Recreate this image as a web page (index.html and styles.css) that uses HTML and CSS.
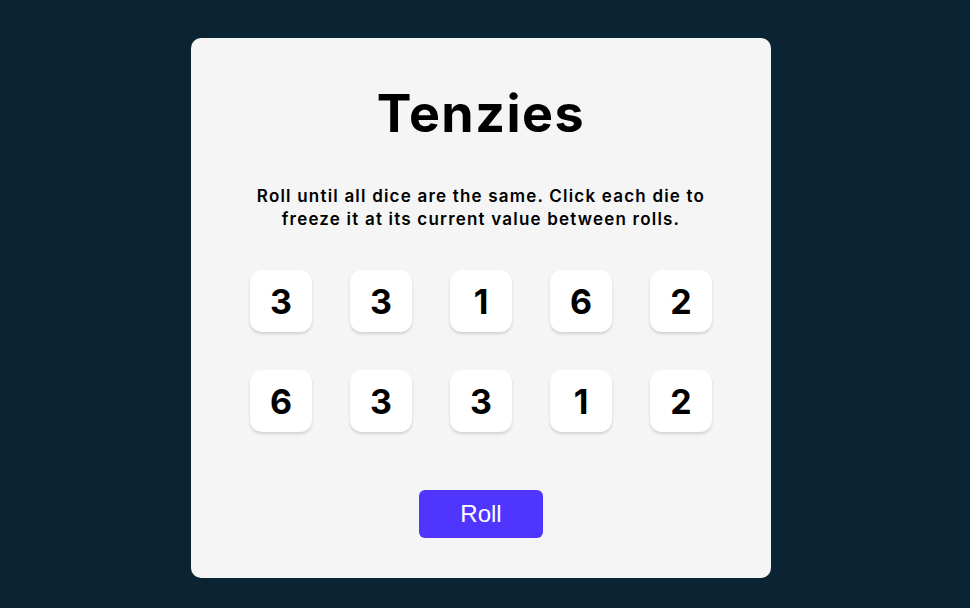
FILE: index.html
```html
<!DOCTYPE html>
<html>
<head>
<meta charset="utf-8">
<link rel="stylesheet" href="styles.css">
</head>
<body>
<main class="card">
  <h1 class="title">Tenzies</h1>
  <p class="instructions">Roll until all dice are the same. Click each die to freeze it at its current value between rolls.</p>
  <div class="dice">
    <button class="die">3</button>
    <button class="die">3</button>
    <button class="die">1</button>
    <button class="die">6</button>
    <button class="die">2</button>
    <button class="die">6</button>
    <button class="die">3</button>
    <button class="die">3</button>
    <button class="die">1</button>
    <button class="die">2</button>
  </div>
  <button class="roll">Roll</button>
</main>
</body>
</html>
```
FILE: styles.css
```css
html, body {
  margin: 0;
  padding: 0;
}
body {
  background: #0B2434;
  height: 608px;
  padding-top: 38px;
  box-sizing: border-box;
  font-family: "Inter", "Lato", sans-serif;
}
.card {
  width: 580px;
  height: 540px;
  margin: 0 0 0 191px;
  background: #F5F5F5;
  border-radius: 10px;
  display: flex;
  flex-direction: column;
  align-items: center;
  box-sizing: border-box;
  padding-top: 50px;
}
.title {
  margin: 0;
  font-size: 52px;
  font-weight: 700;
  line-height: 1;
  letter-spacing: 1.5px;
  color: #000;
}
.instructions {
  margin: 45px 0 0;
  width: 474px;
  text-align: center;
  font-size: 17px;
  font-weight: 600;
  line-height: 23px;
  letter-spacing: 1.2px;
  color: #000;
}
.dice {
  margin-top: 39px;
  display: grid;
  grid-template-columns: repeat(5, 62px);
  gap: 38px;
}
.die {
  width: 62px;
  height: 62px;
  border: none;
  border-radius: 12px;
  background: #fff;
  box-shadow: 0 2px 3px rgba(0,0,0,0.15);
  font-family: "Inter", sans-serif;
  font-size: 34px;
  font-weight: 700;
  color: #000;
  padding: 0;
}
.roll {
  margin-top: 58px;
  width: 124px;
  height: 48px;
  border: none;
  border-radius: 6px;
  background: #5035FF;
  color: #fff;
  font-family: "Liberation Sans", Arial, sans-serif;
  font-size: 24px;
  padding: 0;
}
```
